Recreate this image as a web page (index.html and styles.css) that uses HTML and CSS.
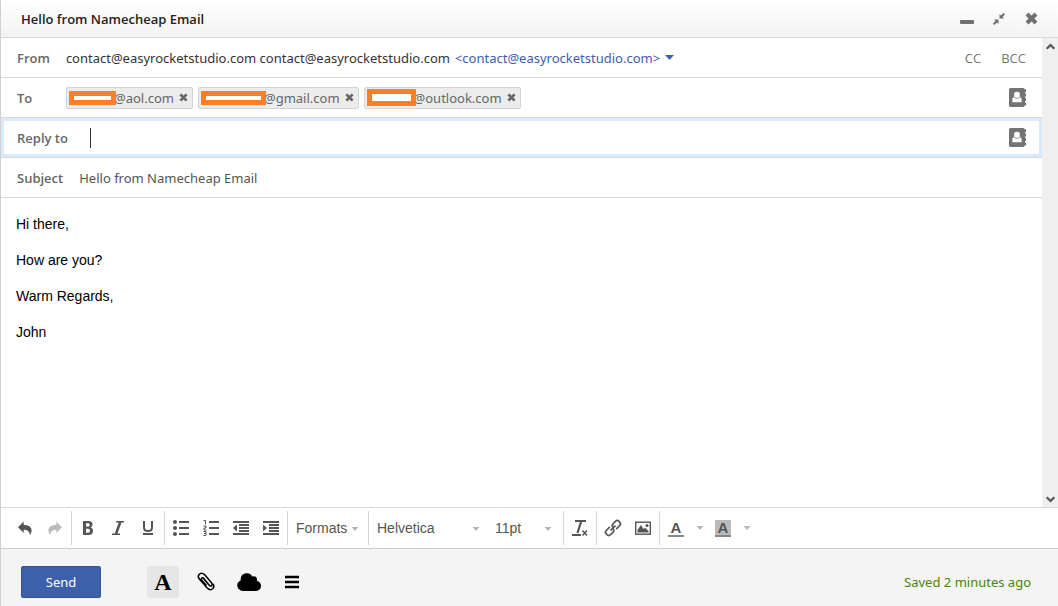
FILE: index.html
```html
<!DOCTYPE html>
<html lang="en">
<head>
<meta charset="utf-8">
<title>Hello from Namecheap Email</title>
<link rel="stylesheet" href="styles.css">
</head>
<body>
<svg class="sprite" aria-hidden="true">
  <symbol id="i-x" viewBox="0 0 13 13"><path d="M2 2L11 11M11 2L2 11" stroke="currentColor" stroke-width="4"/></symbol>
  <symbol id="i-caret" viewBox="0 0 9 5"><path d="M0 0H9L4.500 5Z" fill="currentColor"/></symbol>
  <symbol id="i-book" viewBox="0 0 17 19"><path fill="currentColor" fill-rule="evenodd" d="M1.500 0H14a1.500 1.500 0 0 1 1.500 1.300H17V4H16V5.500H17V8.500H16V10H17V13H16V14.500H17V17.500H15.500A1.500 1.500 0 0 1 14 19H1.500A1.500 1.500 0 0 1 0 17.500V1.500A1.500 1.500 0 0 1 1.500 0ZM5.200 6.200C5.200 8 5.600 8.600 4.600 9.300C3.500 10 3.300 10.800 3.300 13.700Q3.300 14.300 4 14.300H12Q12.700 14.300 12.700 13.700C12.700 10.800 12.500 10 11.400 9.300C10.400 8.600 10.800 8 10.800 6.200A2.800 2.400 0 0 0 5.200 6.200Z"/><path d="M5 9.500Q8 11 11 9.500" fill="none" stroke="currentColor" stroke-width=".8"/></symbol>
</svg>
<main class="compose">
  <header class="titlebar">
    <h1 class="title">Hello from Namecheap Email</h1>
    <button class="window-btn" aria-label="Minimize"><svg width="14" height="13" viewBox="0 0 14 13"><rect y="8" width="14" height="4" rx="1" fill="currentColor"/></svg></button>
    <button class="window-btn" aria-label="Exit full screen"><svg width="12" height="12" viewBox="0 0 12 12" fill="currentColor"><path d="M6.500 5.500V1L8 2.500L10.600 0L12 1.400L9.500 4L11 5.500ZM5.500 6.500V11L4 9.500L1.400 12L0 10.600L2.500 8L1 6.500Z"/></svg></button>
    <button class="window-btn" aria-label="Close"><svg width="13" height="13"><use href="#i-x"/></svg></button>
  </header>

  <div class="content">
    <div class="message">
      <div class="row">
        <span class="label">From</span>
        <button class="sender">contact@easyrocketstudio.com contact@easyrocketstudio.com <span class="address">&lt;contact@easyrocketstudio.com&gt;</span><svg class="sender-caret" width="9" height="5"><use href="#i-caret"/></svg></button>
        <span class="copies"><button class="copy-btn">CC</button><button class="copy-btn">BCC</button></span>
      </div>
      <div class="row">
        <span class="label">To</span>
        <ul class="chips">
          <li class="chip"><span class="mask mask-short"></span><span>@aol.com</span><button class="chip-remove" aria-label="Remove aol.com recipient"><svg width="9" height="9"><use href="#i-x"/></svg></button></li>
          <li class="chip"><span class="mask mask-long"></span><span>@gmail.com</span><button class="chip-remove" aria-label="Remove gmail.com recipient"><svg width="9" height="9"><use href="#i-x"/></svg></button></li>
          <li class="chip"><span class="mask mask-tall"></span><span>@outlook.com</span><button class="chip-remove" aria-label="Remove outlook.com recipient"><svg width="9" height="9"><use href="#i-x"/></svg></button></li>
        </ul>
        <button class="book" aria-label="Address book"><svg width="17" height="19"><use href="#i-book"/></svg></button>
      </div>
      <div class="row row-focus">
        <label class="label" for="reply">Reply to</label>
        <span class="cursor"></span>
        <input class="field" id="reply" type="text">
        <button class="book" aria-label="Address book"><svg width="17" height="19"><use href="#i-book"/></svg></button>
      </div>
      <div class="row">
        <label class="label" for="subject">Subject</label>
        <input class="field" id="subject" type="text" value="Hello from Namecheap Email">
      </div>
      <textarea class="body" aria-label="Message">Hi there,

How are you?

Warm Regards,

John</textarea>
    </div>
    <div class="scrollbar">
      <button class="scroll-btn" aria-label="Scroll up"><svg width="9" height="7" viewBox="0 0 9 7"><path d="M.7 5.800L4.500 2L8.300 5.800" fill="none" stroke="currentColor" stroke-width="2.200"/></svg></button>
      <button class="scroll-btn" aria-label="Scroll down"><svg width="9" height="7" viewBox="0 0 9 7"><path d="M.7 1.200L4.500 5L8.300 1.200" fill="none" stroke="currentColor" stroke-width="2.200"/></svg></button>
    </div>
  </div>

  <div class="toolbar">
    <div class="group">
      <button class="tool" aria-label="Undo"><svg width="14" height="15" viewBox="0 0 16 16"><path fill="currentColor" d="M6.500 0V4C11.500 4 15.500 6 15.500 10C15.500 12 15 13.500 13.500 15.500C13.500 11 10.500 9.300 6.500 9.300V13L0 6.500Z"/></svg></button>
      <button class="tool tool-off" aria-label="Redo"><svg width="14" height="15" viewBox="0 0 16 16"><path fill="currentColor" d="M9.500 0V4C4.500 4 .5 6 .5 10C.5 12 1 13.500 2.500 15.500C2.500 11 5.500 9.300 9.500 9.300V13L16 6.500Z"/></svg></button>
    </div>
    <div class="group">
      <button class="tool" aria-label="Bold"><svg width="16" height="16" viewBox="0 0 16 16"><path fill="currentColor" fill-rule="evenodd" d="M3 1H8.500C11.500 1 12.500 2.500 12.500 4.500C12.500 6 11.800 7 10.500 7.500C12.300 8 13 9.200 13 11C13 13.700 11.300 15 8.500 15H3ZM6 3.200V6.600H7.700C9 6.600 9.600 6 9.600 4.900C9.600 3.800 9 3.200 7.700 3.200ZM6 8.700V12.800H8C9.400 12.800 10 12 10 10.800C10 9.500 9.400 8.700 8 8.700Z"/></svg></button>
      <button class="tool" aria-label="Italic"><svg width="16" height="16" viewBox="0 0 16 16"><path d="M6 1.800H14M2 14.200H10M10.600 1.500L5.800 14.500" stroke="currentColor" stroke-width="1.500"/><path d="M10.400 1.500L5.800 14.500" stroke="currentColor" stroke-width="2.500"/></svg></button>
      <button class="tool" aria-label="Underline"><svg width="16" height="16" viewBox="0 0 16 16"><path d="M4 1V7.500Q4 11 8 11T12 7.500V1M3 14H13" fill="none" stroke="currentColor" stroke-width="2"/></svg></button>
    </div>
    <div class="group">
      <button class="tool" aria-label="Bullet list"><svg width="16" height="16" viewBox="0 0 16 16"><path d="M6 2H16M6 8H16M6 14H16" stroke="currentColor" stroke-width="2"/><g fill="currentColor"><circle cx="2" cy="2" r="2"/><circle cx="2" cy="8" r="2"/><circle cx="2" cy="14" r="2"/></g></svg></button>
      <button class="tool" aria-label="Numbered list"><svg width="16" height="16" viewBox="0 0 16 16"><path d="M6 2H16M6 8H16M6 14H16" stroke="currentColor" stroke-width="2"/><path d="M.5 .5H2.500V4.500M.5 6H3V8H1V10H3.500M.5 11.500H3V15.500H.5M1 13.500H3" fill="none" stroke="currentColor"/></svg></button>
      <button class="tool" aria-label="Decrease indent"><svg width="16" height="14" viewBox="0 0 16 14"><path d="M0 1H16M6 4H16M6 7H16M6 10H16M0 13H16" stroke="currentColor" stroke-width="2"/><path d="M4 3.500V10.500L0 7Z" fill="currentColor"/></svg></button>
      <button class="tool" aria-label="Increase indent"><svg width="16" height="14" viewBox="0 0 16 14"><path d="M0 1H16M6 4H16M6 7H16M6 10H16M0 13H16" stroke="currentColor" stroke-width="2"/><path d="M0 3.500V10.500L4 7Z" fill="currentColor"/></svg></button>
    </div>
    <div class="group">
      <span class="picker picker-format"><select aria-label="Formats"><option>Formats</option></select><svg class="picker-caret" width="8" height="4" viewBox="0 0 9 5"><use href="#i-caret"/></svg></span>
    </div>
    <div class="group">
      <span class="picker picker-font"><select aria-label="Font"><option>Helvetica</option></select><svg class="picker-caret" width="8" height="4" viewBox="0 0 9 5"><use href="#i-caret"/></svg></span>
      <span class="picker picker-size"><select aria-label="Font size"><option>11pt</option></select><svg class="picker-caret" width="8" height="4" viewBox="0 0 9 5"><use href="#i-caret"/></svg></span>
    </div>
    <div class="group">
      <button class="tool" aria-label="Clear formatting"><svg width="16" height="16" viewBox="0 0 16 16"><path d="M3 1H14M0 15H9" stroke="currentColor" stroke-width="2"/><path d="M9.300 1L5.500 13" stroke="currentColor" stroke-width="2.200"/><path d="M10.500 10.500L15 15.500M15 10.500L10.500 15.500" stroke="currentColor" stroke-width="1.500"/></svg></button>
    </div>
    <div class="group">
      <button class="tool" aria-label="Insert link"><svg width="16" height="16" viewBox="0 0 16 16"><g transform="rotate(-45 8 8)" fill="none" stroke="currentColor" stroke-width="1.700"><path d="M6.500 5H1.500A2.600 2.600 0 0 0 -1 7.500V8.500A2.600 2.600 0 0 0 1.500 11H5A2.600 2.600 0 0 0 7.500 8.500"/><path d="M9.500 11H14.500A2.600 2.600 0 0 0 17 8.500V7.500A2.600 2.600 0 0 0 14.500 5H11A2.600 2.600 0 0 0 8.500 7.500"/><path d="M4.500 8H11.500"/></g></svg></button>
      <button class="tool" aria-label="Insert image"><svg width="16" height="14" viewBox="0 0 16 14"><rect x=".7" y="1.200" width="14.600" height="12" fill="none" stroke="currentColor" stroke-width="1.400"/><path d="M2.500 11.500V9L6 4L8.500 8L10 6.800L13.500 10V11.500Z" fill="currentColor"/><circle cx="12" cy="4.500" r="1.500" fill="currentColor"/></svg></button>
    </div>
    <div class="group group-last">
      <button class="tool" aria-label="Text color"><span class="color-letter">A</span></button>
      <button class="more" aria-label="Text color options"><svg width="8" height="4" viewBox="0 0 9 5"><use href="#i-caret"/></svg></button>
      <button class="tool" aria-label="Background color"><span class="color-letter color-fill">A</span></button>
      <button class="more" aria-label="Background color options"><svg width="8" height="4" viewBox="0 0 9 5"><use href="#i-caret"/></svg></button>
    </div>
  </div>

  <footer class="footer">
    <button class="send">Send</button>
    <div class="actions">
      <button class="action action-on" aria-label="Formatting"><span class="serif-letter">A</span></button>
      <button class="action" aria-label="Attach file"><svg width="18" height="19" viewBox="0 0 18 19"><path d="M6 6L12 13Q13.300 14.600 14.600 13.600Q15.800 12.400 14.500 10.800L7.500 2.600Q4.800 .2 2.300 2.300Q.2 4.500 2.300 7L10.200 16Q13.200 19 15.800 16.800Q18 14.500 15.800 11.800M6 6L9.200 9.700M12 13L6.800 6.600Q5.600 5.200 4.600 6.100Q3.700 7 4.900 8.400L9.500 13.600" fill="none" stroke="currentColor" stroke-width="1.500"/></svg></button>
      <button class="action" aria-label="Cloud files"><svg width="24" height="18" viewBox="0 0 24 18"><path fill="currentColor" d="M6 18A6 6 0 0 1 .2 12.500C.2 10 1.600 8.300 3.800 7.300C3.300 3 6 .3 9.800 .3C12.300 .3 14.200 1.300 15.200 3.500C18.500 2.300 20.700 5 19.800 7.800C22.500 8.500 24 10.500 24 12.800C24 15.800 22 18 19 18Z"/></svg></button>
      <button class="action" aria-label="More options"><svg width="14" height="12" viewBox="0 0 14 12"><path d="M0 1H14M0 6H14M0 11H14" stroke="currentColor" stroke-width="2.400"/></svg></button>
    </div>
    <span class="status">Saved 2 minutes ago</span>
  </footer>
</main>
</body>
</html>
```

FILE: styles.css
```css
* { box-sizing: border-box; }
body {
  margin: 0;
  font-family: "Noto Sans", "Open Sans", sans-serif;
  font-size: 13px;
  line-height: 20px;
  color: #333;
  background: #fff;
}
button, input, select, textarea {
  margin: 0;
  padding: 0;
  border: 0;
  background: none;
  color: inherit;
  font: inherit;
  outline: 0;
}
svg { display: block; flex: none; overflow: visible; }
.sprite { position: absolute; width: 0; height: 0; }

.compose {
  display: flex;
  flex-direction: column;
  min-height: 100vh;
  border-left: 1px solid #d0d0d0;
}
.titlebar {
  display: flex;
  align-items: center;
  height: 38px;
  padding: 0 11px 0 20px;
  border-bottom: 1px solid #d9d9d9;
  background: linear-gradient(#fff, #f3f3f3);
}
.title, .label { font-family: "Open Sans", "Noto Sans", sans-serif; font-weight: 600; }
.title { flex: 1; margin: 0; color: #222; font-size: 13px; }
.window-btn {
  display: flex;
  align-items: center;
  justify-content: center;
  width: 32px;
  height: 32px;
  color: #707070;
}

.content { display: flex; flex: 1; }
.message { display: flex; flex: 1; flex-direction: column; min-width: 0; }
.row {
  display: flex;
  align-items: center;
  height: 40px;
  padding: 0 16px;
  border-bottom: 1px solid #d9d9d9;
}
.row-focus { box-shadow: inset 0 0 0 3px #d9eafa; }
.label { min-width: 16px; margin-right: 16px; color: #666; }
.sender { display: flex; align-items: center; gap: 5px; }
.address, .sender-caret { color: #3c60aa; }
.copies { display: flex; gap: 20px; margin-left: auto; }
.copy-btn { color: #777; font-family: "Open Sans", "Noto Sans", sans-serif; }
.chips {
  display: flex;
  flex: 1;
  gap: 5px;
  margin: 0 0 0 17px;
  padding: 0;
  list-style: none;
}
.chip {
  display: flex;
  align-items: center;
  height: 22px;
  padding: 0 4px 0 2px;
  border: 1px solid #d4d4d4;
  border-radius: 2px;
  background: #ececec;
  color: #666;
}
.mask { z-index: 1; height: 14px; margin-right: -2px; border: 5px solid #ff7f27; background: #fff; }
.mask-short { width: 47px; }
.mask-long { width: 65px; }
.mask-tall { width: 49px; height: 17px; }
.chip-remove { margin-left: 5px; color: #666; }
.book { margin-left: auto; color: #747474; }
.cursor { width: 1px; height: 20px; margin-left: 6px; background: #333; }
.field { flex: 1; min-width: 0; height: 24px; color: #555; }
.body {
  flex: 1;
  padding: 17px 15px;
  resize: none;
  color: #000;
  font-family: "Liberation Sans", Arial, sans-serif;
  font-size: 14px;
  line-height: 18px;
}
.scrollbar {
  display: flex;
  flex-direction: column;
  justify-content: space-between;
  width: 16px;
  background: #efefef;
}
.scroll-btn { display: flex; align-items: center; justify-content: center; height: 16px; color: #555; }

.toolbar {
  display: flex;
  height: 41px;
  padding: 3px 8px;
  border-top: 1px solid #d9d9d9;
  color: #555;
}
.group { display: flex; padding: 0 1px; border-right: 1px solid #d4d4d4; }
.group-last { border-right: 0; }
.tool { display: flex; align-items: center; justify-content: center; width: 30px; }
.tool-off { color: #bbb; }
.picker { position: relative; display: flex; }
.picker select {
  width: 100%;
  padding-left: 7px;
  appearance: none;
  font-family: "Liberation Sans", Arial, sans-serif;
  font-size: 14px;
}
.picker-caret { position: absolute; top: 16px; right: 8px; color: #b3b8be; }
.picker-format { width: 78px; }
.picker-font { width: 118px; }
.picker-size { width: 74px; }
.picker-size .picker-caret { right: 10px; }
.more { display: flex; align-items: center; justify-content: center; width: 17px; color: #b3b8be; }
.color-letter {
  width: 16px;
  border-bottom: 2px solid #888;
  font-family: "Liberation Sans", Arial, sans-serif;
  font-size: 15px;
  font-weight: 700;
  line-height: 15px;
}
.color-fill { background: #bbb; }

.footer {
  display: flex;
  align-items: center;
  height: 58px;
  padding: 8px 27px 0 20px;
  border-top: 1px solid #ccc;
  background: #f4f4f4;
}
.send {
  width: 80px;
  height: 32px;
  border: 1px solid #34559b;
  border-radius: 2px;
  background: #3c60aa;
  color: #fff;
}
.actions { display: flex; gap: 11px; margin-left: 46px; color: #000; }
.action {
  display: flex;
  align-items: center;
  justify-content: center;
  width: 32px;
  height: 32px;
  border-radius: 3px;
}
.action-on { background: #e6e6e6; }
.serif-letter { font-family: "Liberation Serif", serif; font-size: 24px; font-weight: 700; }
.status { margin-left: auto; color: #47850b; }
```
